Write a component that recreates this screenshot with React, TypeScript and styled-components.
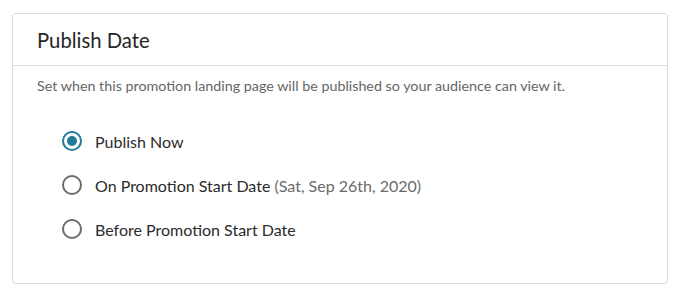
import styled, { createGlobalStyle } from "styled-components";
import { useState } from "react";

const GlobalStyle = createGlobalStyle`
  html, body {
    margin: 0;
    padding: 0;
    background: #ffffff;
  }
  body {
    font-family: Lato, "Noto Sans", sans-serif;
    color: #2b2b2b;
  }
`;

const options = [
  { id: "now", label: "Publish Now" },
  { id: "start", label: "On Promotion Start Date", note: "(Sat, Sep 26th, 2020)" },
  { id: "before", label: "Before Promotion Start Date" },
];

const App = () => {
  const [selected, setSelected] = useState("now");

  return (
    <>
      <GlobalStyle />
      <Page>
        <Card>
          <CardHeader>
            <Title>Publish Date</Title>
          </CardHeader>
          <CardBody>
            <Description>
              Set when this promotion landing page will be published so your
              audience can view it.
            </Description>
            <RadioList>
              {options.map((o) => (
                <RadioRow key={o.id} onClick={() => setSelected(o.id)}>
                  <Radio $checked={selected === o.id} />
                  <Label>
                    {o.label}
                    {o.note && <Note> {o.note}</Note>}
                  </Label>
                </RadioRow>
              ))}
            </RadioList>
          </CardBody>
        </Card>
      </Page>
    </>
  );
};

const Page = styled.div`
  padding: 13px 12px 16px 12px;
`;

const Card = styled.section`
  width: 656px;
  height: 271px;
  box-sizing: border-box;
  border: 1px solid #dcdcdc;
  border-radius: 4px;
  background: #fff;
`;

const CardHeader = styled.header`
  height: 52px;
  box-sizing: border-box;
  border-bottom: 1px solid #dcdcdc;
  padding: 0 24px;
  display: flex;
  align-items: center;
`;

const Title = styled.h2`
  margin: 0;
  font-size: 20.3px;
  font-weight: 400;
  color: #262626;
`;

const CardBody = styled.div`
  padding: 10px 24px 0;
`;

const Description = styled.p`
  margin: 0;
  font-size: 14.3px;
  line-height: 20px;
  color: #666666;
`;

const RadioList = styled.div`
  margin-top: 35px;
  padding-left: 25px;
  display: flex;
  flex-direction: column;
  gap: 24px;
`;

const RadioRow = styled.label`
  display: flex;
  align-items: center;
  gap: 13px;
  height: 20px;
  cursor: pointer;
`;

const Radio = styled.span<{ $checked: boolean }>`
  width: 20px;
  height: 20px;
  box-sizing: border-box;
  border-radius: 50%;
  border: 2px solid ${(p) => (p.$checked ? "#1f7a9c" : "#6b6b6b")};
  display: flex;
  align-items: center;
  justify-content: center;
  flex-shrink: 0;
  &::after {
    content: "";
    width: 10px;
    height: 10px;
    border-radius: 50%;
    background: #1f7a9c;
    display: ${(p) => (p.$checked ? "block" : "none")};
  }
`;

const Label = styled.span`
  font-size: 16px;
  color: #2b2b2b;
`;

const Note = styled.span`
  color: #6b6b6b;
`;

export default App;
